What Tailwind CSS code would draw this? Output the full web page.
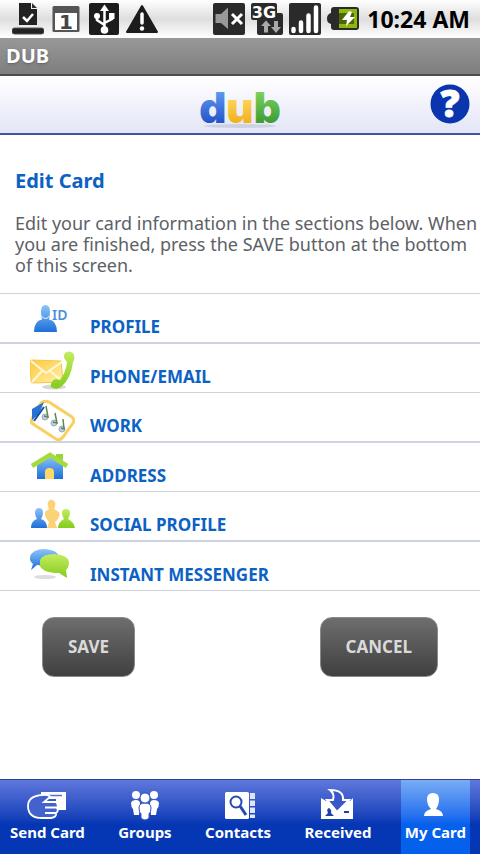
<!DOCTYPE html>
<html lang="en">

<head>
    <meta charset="UTF-8">
    <meta name="viewport" content="width=device-width, initial-scale=1.0">
    <title>DUB - Edit Card</title>
    <script src="https://cdn.jsdelivr.net/npm/@tailwindcss/browser@4"></script>
</head>

<body class="flex min-h-screen flex-col bg-white font-['Noto_Sans','Open_Sans',sans-serif]">
    <!-- status bar -->
    <div class="flex h-[38px] items-center justify-between bg-linear-to-b from-white via-[#dedede] to-white pl-3 pr-[10px]">
        <div class="flex items-center gap-2">
            <svg class="h-8 w-8" viewBox="0 0 32 32">
                <path d="M7 0H19V6H25V22H7Z" fill="#222" />
                <path d="M20 0L25 5H20Z" fill="#333" />
                <path d="M11 14L15 18L21 11" fill="none" stroke="#fff" stroke-width="2.5" />
                <rect x="0" y="25" width="32" height="6" rx="2.5" fill="#222" stroke="#555" />
            </svg>
            <svg class="h-8 w-7" viewBox="0 0 28 32">
                <rect x="0.5" y="3" width="27" height="26" rx="1.5" fill="#555" />
                <rect x="3" y="10" width="22" height="17" fill="#fff" />
                <text x="14" y="26" text-anchor="middle" font-family="DejaVu Sans" font-weight="700" font-size="20" fill="#444">1</text>
            </svg>
            <svg class="h-8 w-8" viewBox="0 0 32 32">
                <rect x="1" y="0" width="30" height="32" rx="2" fill="#1c1c1c" />
                <path d="M16.500 6V27M16.500 22L9 17V13M16.500 20L24 16V12" fill="none" stroke="#fff" stroke-width="2.500" />
                <path d="M16.500 1.500L21 8H12Z" fill="#fff" />
                <circle cx="9" cy="13" r="3" fill="#fff" />
                <rect x="21" y="10" width="5.500" height="6" fill="#fff" />
                <circle cx="16.500" cy="27" r="3.800" fill="#fff" />
            </svg>
            <svg class="-ml-1 h-8 w-[34px]" viewBox="0 0 34 32">
                <path d="M18 3L33 29H3Z" fill="#1c1c1c" stroke="#1c1c1c" stroke-width="2" stroke-linejoin="round" />
                <path d="M18 11V20" stroke="#fff" stroke-width="3.500" stroke-linecap="round" />
                <circle cx="18" cy="25.500" r="2.200" fill="#fff" />
            </svg>
        </div>
        <div class="flex items-center gap-[6px]">
            <svg class="h-8 w-8" viewBox="0 0 32 32">
                <rect width="32" height="32" rx="2" fill="#2a2a2a" />
                <path d="M2.500 11H8L15 4.500V26L8 20H2.500Z" fill="#999" />
                <path d="M19 11L29 21M29 11L19 21" stroke="#fff" stroke-width="3" />
            </svg>
            <svg class="h-8 w-8" viewBox="0 0 32 32">
                <path d="M2 0H24Q26 0 26 2V10H30Q32 10 32 12V30Q32 32 30 32H8Q6 32 6 30V17H2Q0 17 0 15V2Q0 0 2 0Z" fill="#2a2a2a" />
                <text x="13" y="15" text-anchor="middle" font-family="DejaVu Sans" font-weight="700" font-size="16" fill="#fff">3G</text>
                <path d="M15 17.500L20 23H17V29.500H13V23H10ZM25 30L20 24H23V18H27V24H30Z" fill="#aaa" />
            </svg>
            <svg class="h-8 w-8" viewBox="0 0 32 32">
                <rect width="32" height="32" rx="2" fill="#2a2a2a" />
                <path d="M4.500 26V28M12 19.500V28M19.500 12.500V28M27 4.500V28" stroke="#fff" stroke-width="4.500" stroke-linecap="round" />
            </svg>
            <svg class="h-8 w-8" viewBox="0 0 32 32">
                <path d="M7 4H29Q32 4 32 7V24Q32 27 29 27H7Q4 27 4 24V21Q0 20 0 15.500Q0 11 4 10V7Q4 4 7 4Z" fill="#2a2a2a" />
                <rect x="12" y="6" width="18" height="19" fill="#8db80a" />
                <rect x="12" y="10" width="15" height="11" fill="#4b650a" />
                <path d="M22 8L15 17H20L19 23L28 14H23L25 9Z" fill="#fff" />
            </svg>
            <span class="ml-[2px] text-[23px] leading-8 font-bold whitespace-nowrap text-black">10:24 AM</span>
        </div>
    </div>

    <div class="h-[38px] border-b-2 border-[#4c4c50] bg-linear-to-b from-[#989898] to-[#7e7e7e] px-[6px]">
        <h1 class="text-xl leading-9 font-bold text-white text-shadow-md">DUB</h1>
    </div>

    <header class="grid h-[59px] grid-cols-[1fr_auto_1fr] items-center border-b-2 border-[#3f54a8] bg-linear-to-b from-[#fdfdff] from-10% via-[#eeeffa] via-60% to-[#e4e6f6]">
        <a href="#" aria-label="dub" class="col-start-2">
            <svg class="h-14 w-[84px]" viewBox="0 0 84 56">
                <defs>
                    <linearGradient id="logoBlue" x1="0" y1="0" x2="0" y2="1">
                        <stop offset="0.2" stop-color="#5d97f0" />
                        <stop offset="0.8" stop-color="#2454c8" />
                    </linearGradient>
                    <linearGradient id="logoYellow" x1="0" y1="0" x2="0" y2="1">
                        <stop offset="0.3" stop-color="#ffd65a" />
                        <stop offset="0.8" stop-color="#f0b020" />
                    </linearGradient>
                    <linearGradient id="logoGreen" x1="0" y1="0" x2="0" y2="1">
                        <stop offset="0.2" stop-color="#7cd05a" />
                        <stop offset="0.8" stop-color="#3c9c34" />
                    </linearGradient>
                </defs>
                <ellipse cx="42" cy="49" rx="36" ry="2" fill="#ced1e2" />
                <text x="42" y="46" text-anchor="middle" font-family="Inter" font-weight="900" font-size="42"><tspan fill="url(#logoBlue)">d</tspan><tspan fill="url(#logoYellow)">u</tspan><tspan fill="url(#logoGreen)">b</tspan></text>
            </svg>
        </a>
        <button type="button" aria-label="Help" class="mr-[9px] justify-self-end">
            <svg class="h-[57px] w-[42px]" viewBox="0 0 42 57">
                <circle cx="21" cy="28" r="19.500" fill="#0b35ae" />
                <text x="21" y="41" text-anchor="middle" font-family="Noto Sans" font-weight="900" font-size="37" fill="#fff" stroke="#fff" stroke-width="1">?</text>
            </svg>
        </button>
    </header>

    <main class="flex-1 pt-8">
        <div class="pl-[15px]">
            <h2 class="text-xl leading-7 font-bold text-[#0b62c4]">Edit Card</h2>
            <p class="mt-[18px] text-lg leading-[21px] text-[#5c6166]">Edit your card information in the sections below. When you are finished, press the SAVE button at the bottom of this screen.</p>
        </div>

        <ul class="mt-[17px] border-t border-[#cdd2dd]">
            <li class="border-b-2 border-[#cdd3e3]">
                <a href="#" class="flex h-12 items-center gap-[15px] pl-[30px]">
                    <svg class="h-12 w-[45px]" viewBox="0 0 45 48">
                        <defs>
                            <linearGradient id="blue" x1="0" y1="0" x2="0" y2="1">
                                <stop offset="0" stop-color="#8cc4f8" />
                                <stop offset="1" stop-color="#1d6fd8" />
                            </linearGradient>
                            <linearGradient id="green" x1="0" y1="0" x2="0" y2="1">
                                <stop offset="0" stop-color="#c4ec60" />
                                <stop offset="1" stop-color="#84cc1c" />
                            </linearGradient>
                            <linearGradient id="gold" x1="0" y1="0" x2="1" y2="1">
                                <stop offset="0" stop-color="#ffc93c" />
                                <stop offset="1" stop-color="#fff0a8" />
                            </linearGradient>
                        </defs>
                        <path d="M4 38Q4 27 12 25.500Q11 22 11 18Q11 11 15.500 11Q20 11 20 18Q20 22 19 25.500Q27 27 27 38Z" fill="url(#blue)" />
                        <path d="M11.500 22Q15.500 27 19.500 22" fill="none" stroke="#fff" stroke-width="1" />
                        <text x="22" y="26" font-family="Noto Sans" font-weight="600" font-size="14" fill="#4e8ed8">ID</text>
                    </svg>
                    <span class="pt-[17px] text-[17px] leading-[30px] font-bold text-[#0b62c4]">PROFILE</span>
                </a>
            </li>
            <li class="border-b border-[#cdd2dd]">
                <a href="#" class="flex h-12 items-center gap-[15px] pl-[30px]">
                    <svg class="h-12 w-[45px]" viewBox="0 0 45 48">
                        <ellipse cx="24" cy="43" rx="12" ry="2.500" fill="#d8d8d0" />
                        <path d="M0 18Q0 16 2 16L31 17L33 38L3 39Q1 39 1 37Z" fill="url(#gold)" stroke="#f6c648" stroke-width="1" />
                        <path d="M1 17L16 29L32 18M2 38L12 27M32 37L20 27" fill="none" stroke="#fff8dc" stroke-width="2" />
                        <path d="M35 9Q39 6 43 9Q46 13 43 18Q41 34 32 42Q27 47 21 43Q20 37 26 35L30 36Q36 28 37 18Q32 14 35 9Z" fill="url(#green)" />
                    </svg>
                    <span class="pt-[17px] text-[17px] leading-[30px] font-bold text-[#0b62c4]">PHONE/EMAIL</span>
                </a>
            </li>
            <li class="border-b-2 border-[#cdd3e3]">
                <a href="#" class="flex h-12 items-center gap-[15px] pl-[30px]">
                    <svg class="h-12 w-[45px]" viewBox="0 0 45 48">
                        <path d="M11 10Q15 7 19 9L42 24Q45 27 43 30L33 44Q30 48 26 46L3 31Q0 29 2 26Z" fill="#fff" stroke="#f9cf60" stroke-width="3" />
                        <path d="M2 16L14 9L9 21L2 27Z" fill="#2873d2" />
                        <path d="M4 28L14 14" stroke="#174eaa" stroke-width="2" />
                        <g fill="#bfcbe0" stroke="#99a9c8" stroke-width="1">
                            <circle cx="15" cy="24" r="3" />
                            <circle cx="24" cy="30" r="3" />
                            <circle cx="32" cy="36" r="3" />
                        </g>
                        <path d="M16 13L18 24L14 23M25 20L27 30L23 29M33 26L34 36L31 35" fill="none" stroke="#5d8a48" stroke-width="1.500" />
                    </svg>
                    <span class="pt-[17px] text-[17px] leading-[30px] font-bold text-[#0b62c4]">WORK</span>
                </a>
            </li>
            <li class="border-b border-[#cdd2dd]">
                <a href="#" class="flex h-12 items-center gap-[15px] pl-[30px]">
                    <svg class="h-12 w-[45px]" viewBox="0 0 45 48">
                        <path d="M26 11H33V22H26Z" fill="#9bd638" />
                        <path d="M7 22L20 13L33 22V36H7Z" fill="url(#blue)" />
                        <path d="M15 36V29Q15 25 19.500 25Q24 25 24 29V36Z" fill="#ffd768" />
                        <path d="M2 23L20 12L37 23" fill="none" stroke="#a5db3c" stroke-width="4.500" />
                    </svg>
                    <span class="pt-[17px] text-[17px] leading-[30px] font-bold text-[#0b62c4]">ADDRESS</span>
                </a>
            </li>
            <li class="border-b-2 border-[#cdd3e3]">
                <a href="#" class="flex h-12 items-center gap-[15px] pl-[30px]">
                    <svg class="h-12 w-[45px]" viewBox="0 0 45 48">
                        <path d="M17 36L19 30Q14 24 15 20L19 17Q17 13 18 10Q21 5 25 10Q26 14 24 17L29 20Q31 25 25 30L27 36Z" fill="#fbd276" />
                        <path d="M1 36Q1 29 7 27Q5 24 5 21Q5 16 9 16Q13 16 13 21Q13 24 11 27Q17 29 17 36Z" fill="url(#blue)" />
                        <path d="M28 36Q28 30 34 27Q32 24 32 21Q32 17 36 17Q40 17 40 21Q40 24 38 27Q44 30 45 36Z" fill="url(#green)" />
                    </svg>
                    <span class="pt-[17px] text-[17px] leading-[30px] font-bold text-[#0b62c4]">SOCIAL PROFILE</span>
                </a>
            </li>
            <li class="border-b border-[#cdd2dd]">
                <a href="#" class="flex h-12 items-center gap-[15px] pl-[30px]">
                    <svg class="h-12 w-[45px]" viewBox="0 0 45 48">
                        <ellipse cx="15" cy="35" rx="11" ry="2" fill="#ddd" />
                        <path d="M1 28L3 22Q-1 19 0 15Q2 7 15 7Q28 8 29 15Q28 23 15 24L7 23Z" fill="url(#blue)" />
                        <path d="M10 18Q12 12 25 12Q38 13 39 20Q39 25 36 28L37 36L29 31Q13 31 10 24Z" fill="url(#green)" />
                    </svg>
                    <span class="pt-[17px] text-[17px] leading-[30px] font-bold text-[#0b62c4]">INSTANT MESSENGER</span>
                </a>
            </li>
        </ul>

        <div class="flex justify-between px-[42px] pt-[26px] pb-8">
            <button type="button" class="h-[60px] rounded-xl border border-[#8a8a8a] bg-linear-to-b from-[#6e6e6e] to-[#404040] px-[25px] text-[17px] font-bold text-[#dadada]">SAVE</button>
            <button type="button" class="h-[60px] rounded-xl border border-[#8a8a8a] bg-linear-to-b from-[#6e6e6e] to-[#404040] px-[25px] text-[17px] font-bold text-[#dadada]">CANCEL</button>
        </div>
    </main>

    <nav class="flex h-[75px] justify-between border-t border-[#30409c] bg-linear-to-b from-[#6078dc] via-[#0536b4] via-60% to-[#0536b4] pr-[10px] pl-[6px] text-[15px] leading-5 font-bold whitespace-nowrap text-white">
        <a href="#" class="flex flex-col items-center px-1 pt-2">
            <svg class="h-[34px] w-10" viewBox="0 0 40 34">
                <path d="M14 4H39V22H29V11H14Z" fill="#fff" />
                <path d="M18 7.500H35" stroke="#5470cc" stroke-width="1.500" />
                <path d="M15 7Q1 8 1 18Q1 30 15 30H24Q30 29 29 25Q32 23 30 20Q32 17 29 14H17L23 9Q22 6 15 7Z" fill="#4462cc" stroke="#fff" stroke-width="1.800" />
                <path d="M17 14H29M18 19.500H30M18 25H29" stroke="#fff" stroke-width="2" />
            </svg>
            Send Card
        </a>
        <a href="#" class="flex flex-col items-center px-1 pt-2">
            <svg class="h-[34px] w-10" viewBox="0 0 40 34">
                <g fill="#fff">
                    <circle cx="11" cy="7" r="4" />
                    <circle cx="29" cy="7" r="4" />
                    <path d="M6 15Q7 12 11 12Q15 12 15 16L14 27H9L8 21Q6 19 6 15ZM34 15Q33 12 29 12Q25 12 25 16L26 27H31L32 21Q34 19 34 15Z" />
                </g>
                <g fill="#fff" stroke="#3654c4" stroke-width="1">
                    <path d="M14 20Q14 15 20 15Q26 15 26 20Q26 24 24 26V30Q20 34 16 30V26Q14 24 14 20Z" />
                    <circle cx="20" cy="10" r="5" />
                </g>
            </svg>
            Groups
        </a>
        <a href="#" class="flex flex-col items-center px-1 pt-2">
            <svg class="h-[34px] w-10" viewBox="0 0 40 34">
                <rect x="7" y="4" width="24" height="27" rx="1.500" fill="#fff" />
                <path d="M32 5H37V11H32ZM32 12.500H37V18H32ZM32 19.500H37V25H32ZM32 26.500H37V30H32Z" fill="#dfe6fa" />
                <circle cx="18" cy="14" r="5.500" fill="none" stroke="#2849b4" stroke-width="2" />
                <path d="M22 18L28 27" stroke="#2849b4" stroke-width="3" />
            </svg>
            Contacts
        </a>
        <a href="#" class="flex flex-col items-center px-1 pt-2">
            <svg class="h-[34px] w-10" viewBox="0 0 40 34">
                <path d="M3 10L8 13H32L35 10V31H3Z" fill="#fff" />
                <path d="M12 2Q26 2 25 12H31L19 24L9 12H15Q17 6 12 2Z" fill="#3a58c8" stroke="#fff" stroke-width="2" />
                <path d="M7 28L10 25Q8 21 11 20Q14 22 13 25L16 28ZM26 23H31V25H26Z" fill="#1e3eae" />
            </svg>
            Received
        </a>
        <a href="#" aria-current="page" class="flex flex-col items-center bg-linear-to-b from-[#78acf4] via-[#0560ec] via-60% to-[#0560ec] px-1 pt-2">
            <svg class="h-[34px] w-10" viewBox="0 0 40 34">
                <path d="M9 28Q9 23 16 21Q12 17 12 11Q12 5 18 5Q24 5 24 11Q24 17 21 21Q28 23 28 28Z" fill="#fff" />
            </svg>
            My Card
        </a>
    </nav>
</body>

</html>
